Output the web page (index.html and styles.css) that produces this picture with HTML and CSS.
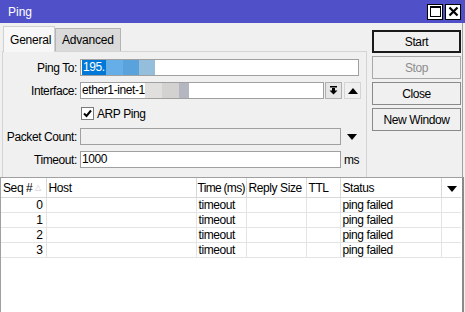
FILE: index.html
```html
<!DOCTYPE html>
<html lang="en">

<head>
    <meta charset="UTF-8">
    <link rel="stylesheet" href="styles.css">
    <title>Ping</title>
</head>

<body>
    <div class="window">
        <div class="titlebar">
            <span class="title">Ping</span>
            <div class="winbtns">
                <span class="winbtn">
                    <svg width="11" height="11" viewBox="0 0 11 11">
                        <rect x="0.5" y="0.5" width="10" height="10" fill="none" stroke="#000" />
                        <rect x="0" y="0" width="11" height="2" fill="#000" />
                    </svg>
                </span>
                <span class="winbtn">
                    <svg width="11" height="11" viewBox="0 0 11 11">
                        <path d="M1.5 1.5 L9.5 9.5 M9.5 1.5 L1.5 9.5" stroke="#000" stroke-width="2.2" />
                    </svg>
                </span>
            </div>
        </div>

        <div class="main">
            <div class="left">
                <div class="tabs">
                    <div class="tab active">General</div>
                    <div class="tab">Advanced</div>
                </div>
                <div class="panel">
                    <div class="row">
                        <label class="lbl">Ping To:</label>
                        <div class="field w-ping">
                            <span class="sel">195.</span><span class="blur b1"></span><span class="blur b2"></span><span class="blur b3"></span>
                        </div>
                    </div>
                    <div class="row">
                        <label class="lbl">Interface:</label>
                        <div class="field w-iface">
                            <span>ether1-inet-1</span><span class="blur g1"></span><span class="blur g2"></span><span class="blur g3"></span>
                        </div>
                        <span class="sqbtn drop">
                            <svg width="9" height="9" viewBox="0 0 9 9">
                                <rect x="1" y="0" width="7" height="1.5" fill="#000" />
                                <path d="M3 2 H6 V4.5 H8.5 L4.5 8.5 L0.5 4.5 H3 Z" fill="#000" />
                            </svg>
                        </span>
                        <span class="sqbtn up">
                            <svg width="10" height="6" viewBox="0 0 10 6">
                                <path d="M0 6 L5 0 L10 6 Z" fill="#000" />
                            </svg>
                        </span>
                    </div>
                    <div class="row">
                        <span class="lbl"></span>
                        <span class="check">
                            <svg width="9" height="9" viewBox="0 0 9 9">
                                <path d="M1 4.5 L3.5 7 L8 1.5" fill="none" stroke="#000" stroke-width="2" />
                            </svg>
                        </span>
                        <span class="checklbl">ARP Ping</span>
                    </div>
                    <div class="row">
                        <label class="lbl">Packet Count:</label>
                        <div class="field w-short disabled"></div>
                        <span class="arrow">
                            <svg width="10" height="6" viewBox="0 0 10 6">
                                <path d="M0 0 L10 0 L5 6 Z" fill="#000" />
                            </svg>
                        </span>
                    </div>
                    <div class="row">
                        <label class="lbl">Timeout:</label>
                        <div class="field w-short">1000</div>
                        <span class="unit">ms</span>
                    </div>
                </div>
            </div>

            <div class="actions">
                <button class="btn default">Start</button>
                <button class="btn" disabled>Stop</button>
                <button class="btn">Close</button>
                <button class="btn">New Window</button>
            </div>
        </div>

        <div class="grid">
            <table>
                <colgroup>
                    <col class="c-seq">
                    <col class="c-host">
                    <col class="c-time">
                    <col class="c-reply">
                    <col class="c-ttl">
                    <col class="c-status">
                    <col class="c-menu">
                </colgroup>
                <thead>
                    <tr>
                        <th>Seq # <span class="sort">&#9651;</span></th>
                        <th>Host</th>
                        <th class="tight">Time (ms)</th>
                        <th>Reply Size</th>
                        <th>TTL</th>
                        <th>Status</th>
                        <th class="menu">
                            <svg width="10" height="6" viewBox="0 0 10 6">
                                <path d="M0 0 L10 0 L5 6 Z" fill="#000" />
                            </svg>
                        </th>
                    </tr>
                </thead>
                <tbody>
                    <tr><td class="num">0</td><td></td><td>timeout</td><td></td><td></td><td>ping failed</td><td></td></tr>
                    <tr><td class="num">1</td><td></td><td>timeout</td><td></td><td></td><td>ping failed</td><td></td></tr>
                    <tr><td class="num">2</td><td></td><td>timeout</td><td></td><td></td><td>ping failed</td><td></td></tr>
                    <tr><td class="num">3</td><td></td><td>timeout</td><td></td><td></td><td>ping failed</td><td></td></tr>
                </tbody>
            </table>
        </div>
    </div>
</body>

</html>
```

FILE: styles.css
```css
html,
body {
    margin: 0;
    padding: 0;
}

body {
    width: 465px;
    height: 312px;
    overflow: hidden;
    font-family: "Liberation Sans", Arial, sans-serif;
    font-size: 12px;
    letter-spacing: -0.4px;
    color: #000;
    background: #f0f0f0;
}

.window {
    width: 465px;
    height: 312px;
    display: flex;
    flex-direction: column;
}

/* barra de titulo */
.titlebar {
    height: 23px;
    flex: none;
    background: #5050c8;
    display: flex;
    align-items: center;
    justify-content: space-between;
    padding: 0 4px 0 8px;
}

.title {
    color: #fff;
    font-size: 12px;
    letter-spacing: 0;
}

.winbtns {
    display: flex;
    gap: 2px;
}

.winbtn {
    width: 14px;
    height: 14px;
    background: #fff;
    border: 1px solid #000;
    display: flex;
    align-items: center;
    justify-content: center;
}

/* zona superior */
.main {
    display: flex;
    height: 154px;
    flex: none;
    border-right: 1px solid #a0a0a0;
    margin-right: 2px;
}

.left {
    width: 365px;
    margin-left: 2px;
    display: flex;
    flex-direction: column;
}

.tabs {
    display: flex;
    align-items: flex-end;
    height: 28px;
    padding-left: 1px;
}

.tab {
    height: 22px;
    line-height: 22px;
    padding: 0 6px;
    background: #dadada;
    border: 1px solid #b4b4b4;
    border-bottom: none;
    letter-spacing: -0.2px;
}

.tab.active {
    height: 25px;
    line-height: 26px;
    background: #f7f7f7;
    border-color: #d0d0d0;
    margin-bottom: -1px;
    position: relative;
    z-index: 1;
    width: 38px;
}

.panel {
    flex: 1;
    border: 1px solid #d4d4d4;
    border-bottom: none;
    padding-top: 7px;
    display: flex;
    flex-direction: column;
    gap: 6px;
}

.row {
    display: flex;
    align-items: center;
    height: 17px;
    white-space: nowrap;
}

.lbl {
    width: 74px;
    margin-right: 3px;
    text-align: right;
    flex: none;
    white-space: nowrap;
}

.field {
    height: 15px;
    border: 1px solid #a0a0a0;
    background: #fff;
    line-height: 15px;
    padding-left: 1px;
    display: flex;
    overflow: hidden;
    white-space: nowrap;
}

.w-ping {
    width: 276px;
}

.w-iface {
    width: 241px;
}

.w-short {
    width: 258px;
}

.field.disabled {
    background: #f0f0f0;
}

.sel {
    background: #0078d7;
    color: #fff;
    padding: 0 1px;
}

.blur {
    display: inline-block;
    height: 15px;
}

.b1 {
    width: 17px;
    background: #66aee8;
}

.b2 {
    width: 16px;
    background: #5aa2dc;
}

.b3 {
    width: 16px;
    background: #95bedd;
}

.g1 {
    width: 17px;
    background: #e0dfde;
}

.g2 {
    width: 17px;
    background: #d4d2d0;
}

.g3 {
    width: 10px;
    background: #b4b7bf;
}

.sqbtn {
    width: 15px;
    height: 15px;
    border: 1px solid #b0b0b0;
    background: #e6e6e6;
    display: flex;
    align-items: center;
    justify-content: center;
}

.drop {
    margin-left: 1px;
}

.up {
    margin-left: 2px;
    background: #f0f0f0;
    border-color: #d4d4d4;
}

.check {
    width: 11px;
    height: 11px;
    border: 1px solid #7a7a7a;
    background: #fff;
    display: flex;
    align-items: center;
    justify-content: center;
    margin-left: 1px;
}

.checklbl {
    margin-left: 3px;
}

.arrow {
    margin-left: 6px;
    display: flex;
}

.unit {
    margin-left: 3px;
}

/* botones */
.actions {
    margin-left: 5px;
    padding-top: 7px;
    display: flex;
    flex-direction: column;
    gap: 3px;
}

.btn {
    width: 89px;
    height: 23px;
    margin: 0;
    padding: 0;
    font-family: inherit;
    font-size: 12px;
    letter-spacing: -0.4px;
    background: #f0f0f0;
    border: 1px solid #8a8a8a;
    color: #000;
}

.btn.default {
    border: 2px solid #1a1a1a;
}

.btn:disabled {
    color: #8d8d8d;
    border-color: #a8a8a8;
}

/* tabla */
.grid {
    flex: 1;
    background: #fff;
    border-top: 1px solid #a0a0a0;
    border-left: 1px solid #a0a0a0;
    border-right: 2px solid #8a8a8a;
    margin-right: 1px;
}

table {
    table-layout: fixed;
    border-collapse: collapse;
    width: 460px;
}

.c-seq {
    width: 45px;
}

.c-host {
    width: 150px;
}

.c-time {
    width: 50px;
}

.c-reply {
    width: 60px;
}

.c-ttl {
    width: 34px;
}

.c-status {
    width: 101px;
}

.c-menu {
    width: 20px;
}

th {
    height: 19px;
    padding: 0 0 0 2px;
    text-align: left;
    font-weight: normal;
    border-right: 1px solid #d8d8d8;
    border-bottom: 1px solid #d8d8d8;
    white-space: nowrap;
    overflow: hidden;
}

th.tight {
    padding-left: 1px;
    letter-spacing: -0.7px;
}

.sort {
    color: #c8c8c8;
    font-size: 8px;
    vertical-align: 2px;
}

th.menu {
    text-align: center;
    border-right: none;
}

td {
    height: 14px;
    padding: 0 0 0 2px;
    line-height: 14px;
    border-right: 1px solid #e4e4e4;
    border-bottom: 1px solid #e4e4e4;
    white-space: nowrap;
    overflow: hidden;
}

td:last-child {
    border-right: none;
}

td.num {
    text-align: right;
    padding: 0 3px 0 0;
}
```
